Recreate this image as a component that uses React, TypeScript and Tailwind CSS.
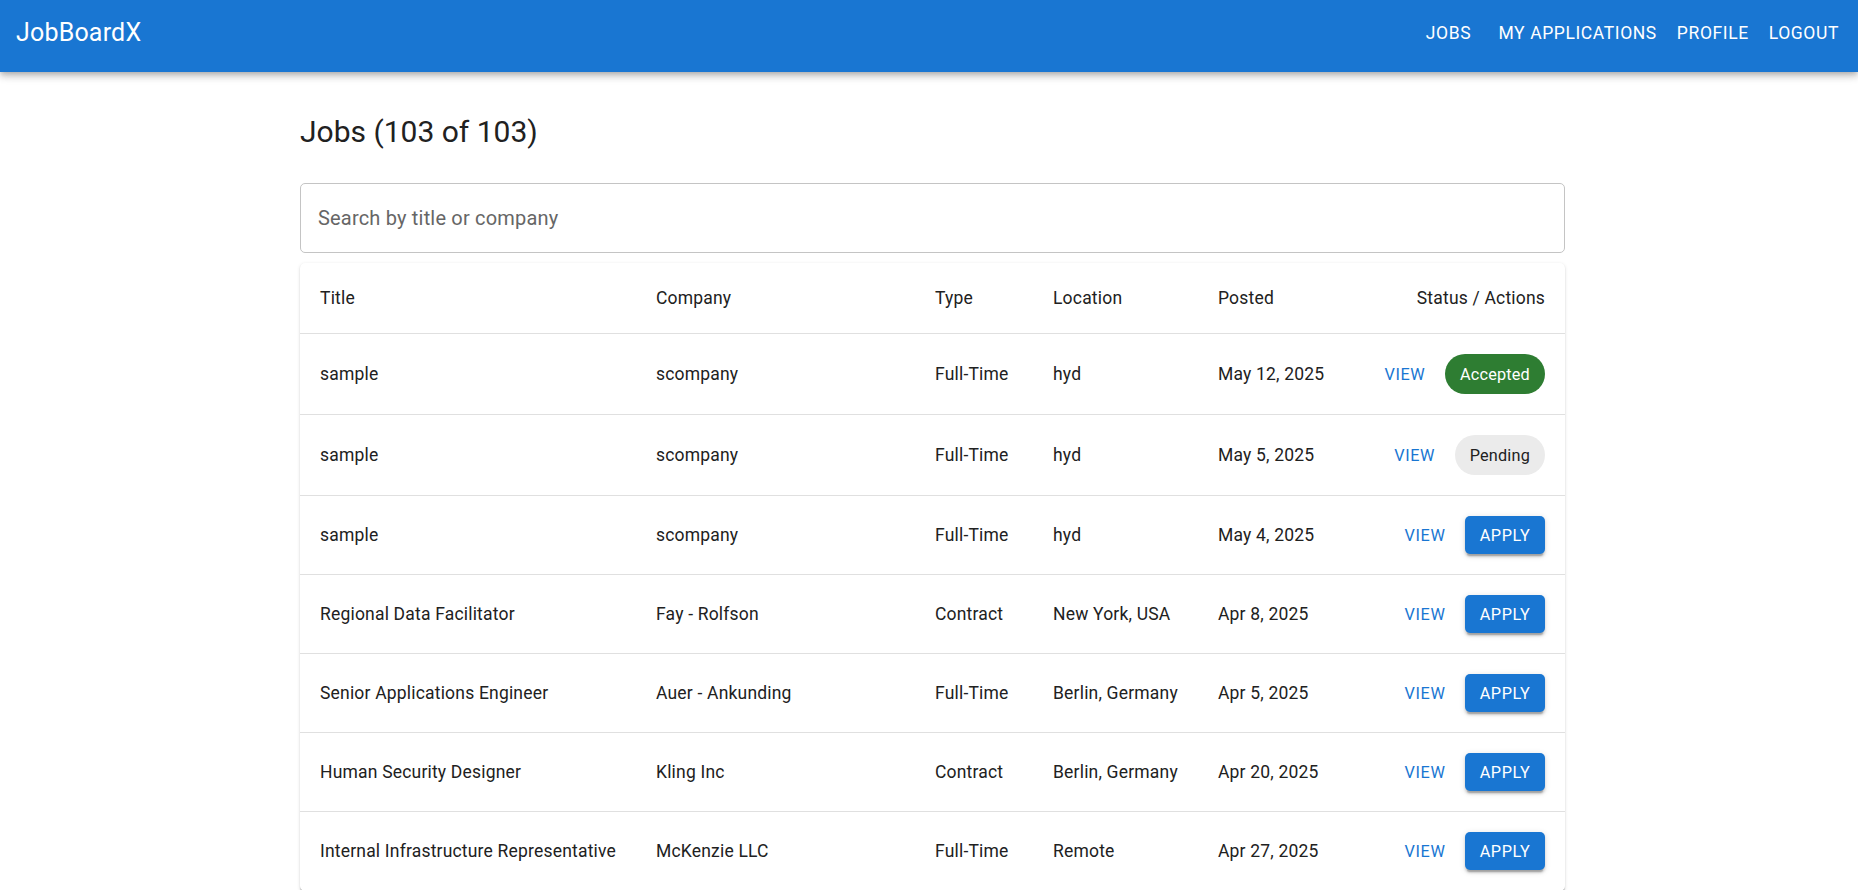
import React from "react";

type Row = {
  title: string;
  company: string;
  type: string;
  location: string;
  posted: string;
  status: "accepted" | "pending" | "apply";
};

const rows: Row[] = [
  { title: "sample", company: "scompany", type: "Full-Time", location: "hyd", posted: "May 12, 2025", status: "accepted" },
  { title: "sample", company: "scompany", type: "Full-Time", location: "hyd", posted: "May 5, 2025", status: "pending" },
  { title: "sample", company: "scompany", type: "Full-Time", location: "hyd", posted: "May 4, 2025", status: "apply" },
  { title: "Regional Data Facilitator", company: "Fay - Rolfson", type: "Contract", location: "New York, USA", posted: "Apr 8, 2025", status: "apply" },
  { title: "Senior Applications Engineer", company: "Auer - Ankunding", type: "Full-Time", location: "Berlin, Germany", posted: "Apr 5, 2025", status: "apply" },
  { title: "Human Security Designer", company: "Kling Inc", type: "Contract", location: "Berlin, Germany", posted: "Apr 20, 2025", status: "apply" },
  { title: "Internal Infrastructure Representative", company: "McKenzie LLC", type: "Full-Time", location: "Remote", posted: "Apr 27, 2025", status: "apply" },
];

const gridCols = "grid grid-cols-[336px_279px_118px_165px_160px_1fr]";

function StatusCell({ status }: { status: Row["status"] }) {
  return (
    <div className="flex items-center justify-end pr-[20px] py-[20px]">
      <button className="w-[80px] h-[38px] flex items-center justify-center text-[16.25px] font-normal uppercase tracking-[0.6px] text-[#1976d2]">
        View
      </button>
      {status === "accepted" && (
        <span className="h-[40px] rounded-full px-[15px] flex items-center bg-[#2e7d32] text-white text-[16.25px] tracking-[0.2px]">
          Accepted
        </span>
      )}
      {status === "pending" && (
        <span className="h-[40px] rounded-full px-[15px] flex items-center bg-[#ebebeb] text-[#212121] text-[16.25px] tracking-[0.2px]">
          Pending
        </span>
      )}
      {status === "apply" && (
        <button className="w-[80px] h-[38px] rounded-[5px] bg-[#1976d2] text-white flex items-center justify-center text-[16.25px] font-normal uppercase tracking-[0.6px] shadow-[0px_3.75px_1.25px_-2.5px_rgba(0,0,0,0.2),0px_2.5px_2.5px_0px_rgba(0,0,0,0.14),0px_1.25px_6.25px_0px_rgba(0,0,0,0.12)]">
          Apply
        </button>
      )}
    </div>
  );
}

export default function App() {
  const nav = ["Jobs", "My Applications", "Profile", "Logout"];
  return (
    <div className="min-h-screen bg-white font-['Roboto',sans-serif] text-[#212121]">
      <header className="relative z-10 h-[72px] bg-[#1976d2] text-white flex items-center pb-[6px] pl-[16px] pr-[9px] shadow-[0px_2.5px_5px_-1.25px_rgba(0,0,0,0.2),0px_5px_6.25px_0px_rgba(0,0,0,0.14),0px_1.25px_12.5px_0px_rgba(0,0,0,0.12)]">
        <div className="text-[25px] leading-[40px] tracking-[0.19px]">JobBoardX</div>
        <nav className="ml-auto flex items-center">
          {nav.map((n) => (
            <button
              key={n}
              className="min-w-[80px] px-[10px] h-[45px] flex items-center justify-center text-[17.5px] font-normal uppercase tracking-[0.6px] text-white"
            >
              {n}
            </button>
          ))}
        </nav>
      </header>

      <main className="ml-[300px] w-[1265px]">
        <h1 className="mt-[40px] text-[30px] leading-[40px] font-normal">Jobs (103 of 103)</h1>

        <div className="mt-[31px] h-[70px] border border-[#c4c4c4] rounded-[5px] flex items-center pl-[17px] text-[20px] text-[#666666] tracking-[0.19px]">
          Search by title or company
        </div>

        <div className="mt-[10px] rounded-[5px] bg-white shadow-[0px_2.5px_1.25px_-1.25px_rgba(0,0,0,0.2),0px_1.25px_1.25px_0px_rgba(0,0,0,0.14),0px_1.25px_3.75px_0px_rgba(0,0,0,0.12)]">
          <div className={`${gridCols} border-b border-[#e0e0e0] text-[17.5px] leading-[30px] tracking-[0.19px]`}>
            <div className="px-[20px] py-[20px]">Title</div>
            <div className="px-[20px] py-[20px]">Company</div>
            <div className="px-[20px] py-[20px]">Type</div>
            <div className="px-[20px] py-[20px]">Location</div>
            <div className="px-[20px] py-[20px]">Posted</div>
            <div className="px-[20px] py-[20px] text-right">Status / Actions</div>
          </div>
          {rows.map((r, i) => (
            <div
              key={i}
              className={`${gridCols} items-center border-b border-[#e0e0e0] text-[17.5px] leading-[25px] tracking-[0.19px]`}
            >
              <div className="px-[20px] whitespace-nowrap">{r.title}</div>
              <div className="px-[20px] whitespace-nowrap">{r.company}</div>
              <div className="px-[20px] whitespace-nowrap">{r.type}</div>
              <div className="px-[20px] whitespace-nowrap">{r.location}</div>
              <div className="px-[20px] whitespace-nowrap">{r.posted}</div>
              <StatusCell status={r.status} />
            </div>
          ))}
        </div>
      </main>
    </div>
  );
}
